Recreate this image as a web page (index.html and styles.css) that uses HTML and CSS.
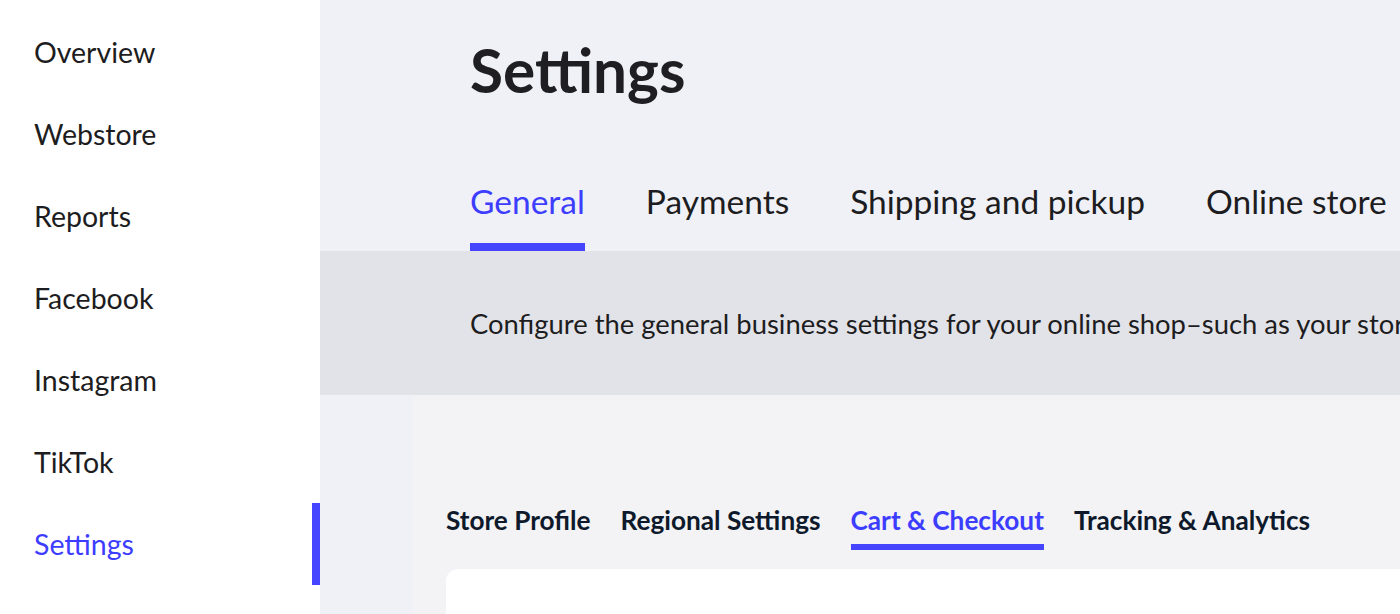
FILE: index.html
```html
<!DOCTYPE html>
<html lang="en">
<head>
<meta charset="utf-8">
<title>Settings</title>
<link rel="stylesheet" href="styles.css">
</head>
<body>
<div class="app">
  <nav class="sidebar">
    <a class="nav-item">Overview</a>
    <a class="nav-item">Webstore</a>
    <a class="nav-item">Reports</a>
    <a class="nav-item">Facebook</a>
    <a class="nav-item">Instagram</a>
    <a class="nav-item">TikTok</a>
    <a class="nav-item active">Settings</a>
  </nav>
  <main class="main">
    <header class="header">
      <h1 class="title">Settings</h1>
      <div class="tabs">
        <span class="tab active">General</span>
        <span class="tab">Payments</span>
        <span class="tab">Shipping and pickup</span>
        <span class="tab">Online store</span>
      </div>
    </header>
    <div class="band">Configure the general business settings for your online shop–such as your store name, address and contact details.</div>
    <div class="lower">
      <div class="strip"></div>
      <div class="content">
        <div class="subtabs">
          <span class="subtab">Store Profile</span>
          <span class="subtab">Regional Settings</span>
          <span class="subtab active">Cart &amp; Checkout</span>
          <span class="subtab">Tracking &amp; Analytics</span>
        </div>
        <div class="card"></div>
      </div>
    </div>
  </main>
</div>
</body>
</html>
```

FILE: styles.css
```css
* { box-sizing: border-box; }
html, body {
  margin: 0;
  padding: 0;
  height: 614px;
  overflow: hidden;
  font-family: Lato, "Noto Sans", sans-serif;
}
.app {
  display: flex;
  width: 1400px;
  height: 614px;
  overflow: hidden;
}
.sidebar {
  width: 320px;
  flex: 0 0 320px;
  background: #ffffff;
  padding-top: 11px;
  display: flex;
  flex-direction: column;
}
.nav-item {
  height: 82px;
  display: flex;
  align-items: center;
  padding-left: 34px;
  font-size: 28.5px;
  color: #1d1d21;
}
.nav-item.active {
  color: #3d3dff;
  border-right: 8px solid #4545ff;
}
.main {
  flex: 1;
  min-width: 0;
  background: #f0f1f6;
  display: flex;
  flex-direction: column;
  overflow: hidden;
}
.header {
  padding: 34px 0 0 150px;
}
.title {
  margin: 0;
  font-size: 60.3px;
  font-weight: 700;
  line-height: 1.2;
  color: #1e1e23;
}
.tabs {
  margin-top: 75px;
  display: flex;
  gap: 61px;
  white-space: nowrap;
}
.tab {
  font-size: 33.5px;
  line-height: 1.2;
  color: #1d1d21;
  padding-bottom: 21px;
  border-bottom: 8px solid transparent;
}
.tab.active {
  color: #3d3dff;
  border-bottom-color: #4545ff;
}
.band {
  height: 144px;
  flex: 0 0 144px;
  background: #e2e3e8;
  padding: 57px 0 0 150px;
  font-size: 27.4px;
  line-height: 1.2;
  color: #1d1d21;
  white-space: nowrap;
  overflow: hidden;
}
.lower {
  flex: 1;
  display: flex;
}
.strip {
  width: 93px;
  flex: 0 0 93px;
  background: #f0f1f6;
}
.content {
  flex: 1;
  background: #f3f2f5;
  padding: 110px 0 0 33px;
  display: flex;
  flex-direction: column;
}
.subtabs {
  display: flex;
  gap: 30px;
  white-space: nowrap;
}
.subtab {
  font-size: 26.2px;
  font-weight: 700;
  line-height: 1.2;
  color: #0e1a2b;
  padding-bottom: 8.5px;
  border-bottom: 6px solid transparent;
}
.subtab.active {
  color: #3d3dff;
  border-bottom-color: #4545ff;
}
.card {
  margin-top: 19px;
  flex: 1;
  background: #ffffff;
  border-radius: 12px 0 0 0;
}
```
